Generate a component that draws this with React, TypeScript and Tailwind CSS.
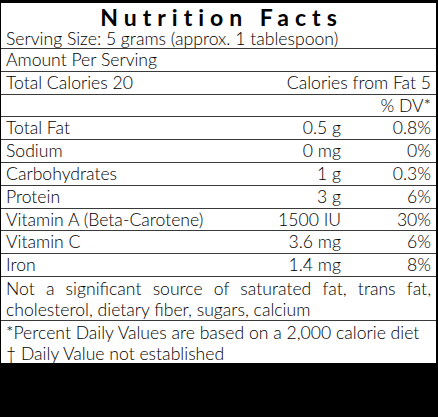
const rows = [
  { name: "Total Fat", amount: "0.5 g", dv: "0.8%" },
  { name: "Sodium", amount: "0 mg", dv: "0%" },
  { name: "Carbohydrates", amount: "1 g", dv: "0.3%" },
  { name: "Protein", amount: "3 g", dv: "6%" },
  { name: "Vitamin A (Beta-Carotene)", amount: "1500 IU", dv: "30%" },
  { name: "Vitamin C", amount: "3.6 mg", dv: "6%" },
  { name: "Iron", amount: "1.4 mg", dv: "8%" },
];

const line = "border-b border-[#3a3a3a]";

export default function App() {
  return (
    <div
      className="min-h-screen bg-black"
      style={{ fontFamily: "Lato, 'Open Sans', sans-serif" }}
    >
      <div className="ml-[1px] mr-[2px] pt-[3px]">
        <div className="bg-white text-[17.6px] font-light text-black">
          {/* header */}
          <div className="h-[25px] pl-[6px] pt-[6px] text-center text-[23px] font-bold leading-[17px] tracking-[6px]">
            Nutrition Facts
          </div>
          <div className={`h-[21px] px-[5px] pt-[1px] leading-[19px] ${line}`}>
            Serving Size: 5 grams (approx. 1 tablespoon)
          </div>

          <div className={`h-[22.8px] px-[5px] leading-[22px] ${line}`}>
            Amount Per Serving
          </div>
          <div className={`flex h-[22.8px] justify-between px-[5px] leading-[22px] ${line}`}>
            <span>Total Calories 20</span>
            <span>Calories from Fat 5</span>
          </div>
          <div className={`h-[22.8px] px-[5px] text-right leading-[22px] ${line}`}>
            % DV*
          </div>

          {rows.map((r) => (
            <div key={r.name} className={`flex h-[22.8px] px-[5px] leading-[22px] ${line}`}>
              <span className="flex-1">{r.name}</span>
              <span className="text-right">{r.amount}</span>
              <span className="w-[90px] text-right">{r.dv}</span>
            </div>
          ))}

          {/* footnotes */}
          <div className={`h-[44px] px-[5px] pt-[1px] text-justify leading-[21px] ${line}`}>
            Not a significant source of saturated fat, trans fat, cholesterol, dietary fiber, sugars, calcium
          </div>
          <div className="h-[42px] px-[5px] pt-[1px] leading-[21px]">
            <div className="whitespace-nowrap">*Percent Daily Values are based on a 2,000 calorie diet</div>
            <div>† Daily Value not established</div>
          </div>
        </div>
      </div>
    </div>
  );
}
